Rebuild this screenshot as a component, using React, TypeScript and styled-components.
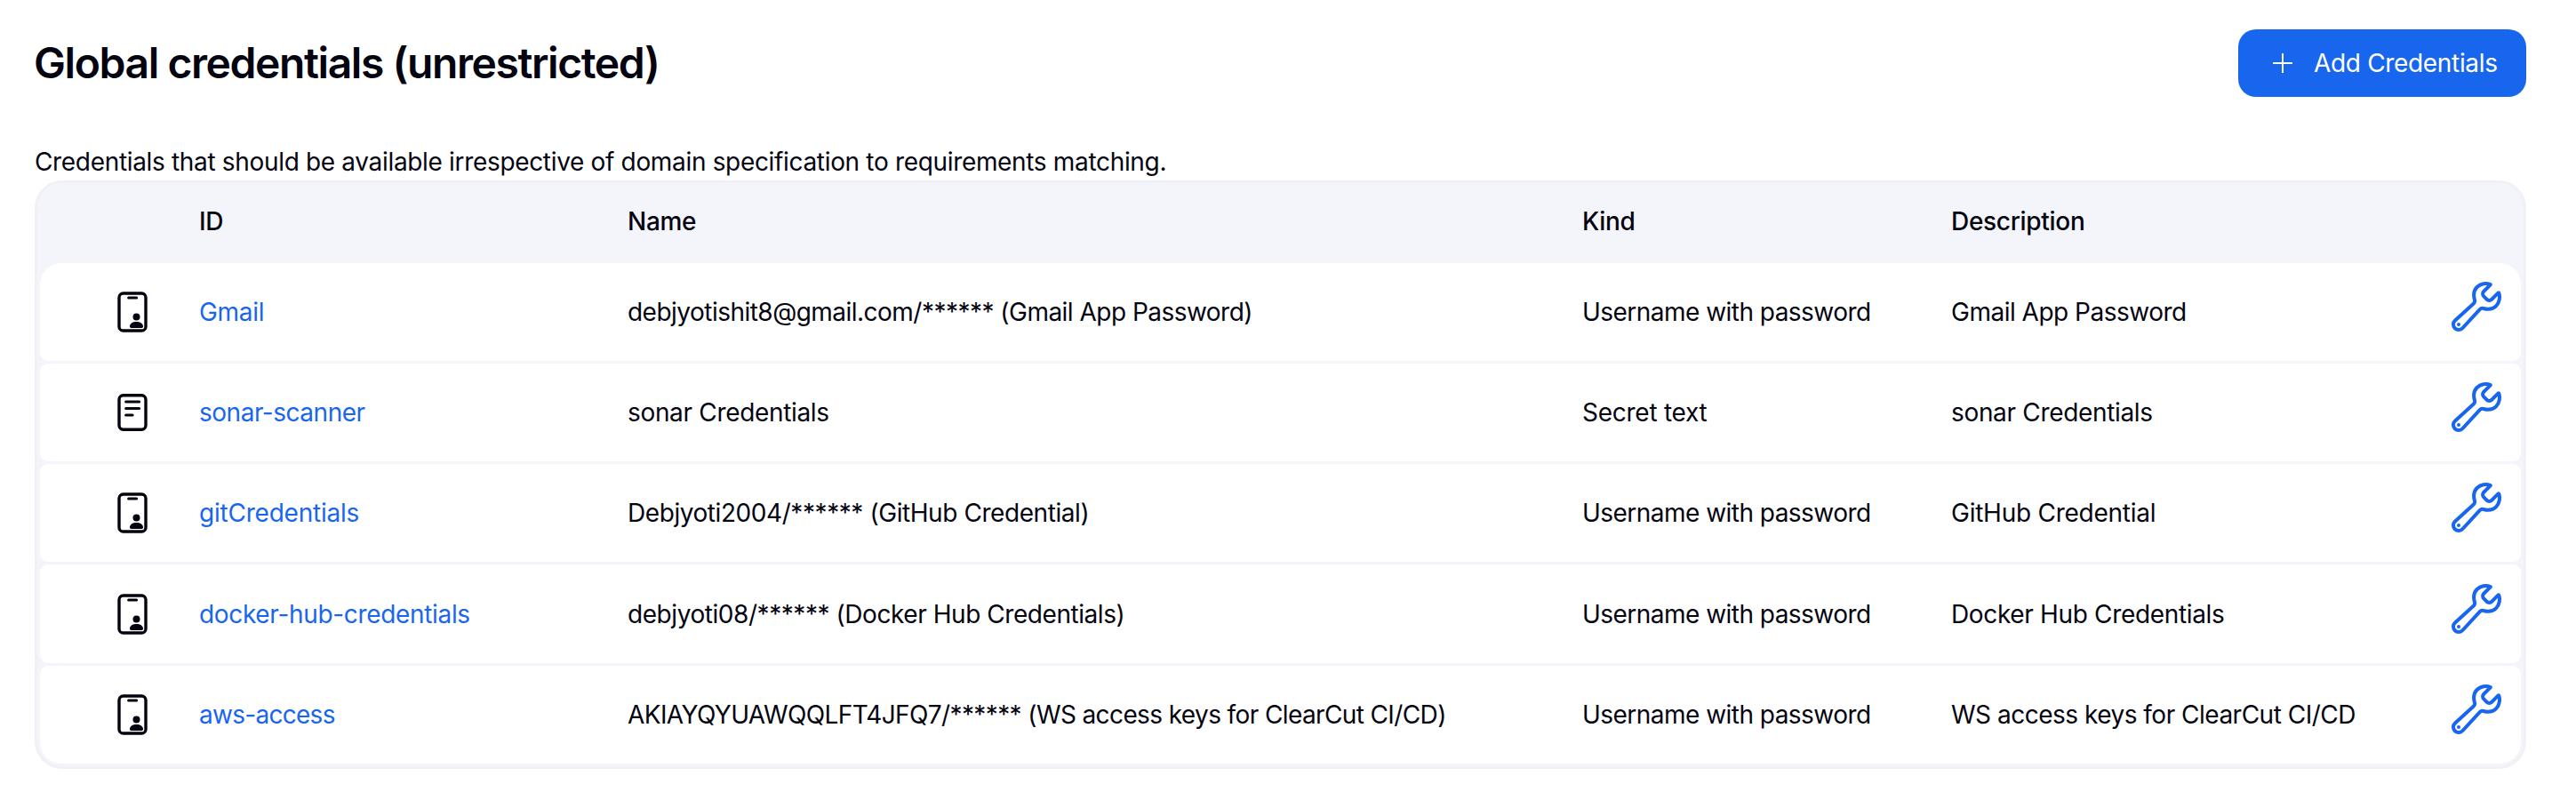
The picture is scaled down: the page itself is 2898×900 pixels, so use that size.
import React from "react";
import styled, { createGlobalStyle } from "styled-components";
import { IoBuildOutline } from "react-icons/io5";

const accent = "#1966ee";
const ink = "#040411";

const GlobalStyle = createGlobalStyle`
  *, *::before, *::after { box-sizing: border-box; }
  body {
    margin: 0;
    background: #fff;
    color: ${ink};
    font-family: Inter, "Liberation Sans", sans-serif;
    font-size: 28px;
    line-height: 40px;
  }
`;

const Page = styled.main`
  min-height: 900px;
  padding: 33px 56px 35px 39px;
`;

const TopBar = styled.header`
  display: flex;
  align-items: center;
  justify-content: space-between;
  height: 76px;
`;

const Title = styled.h1`
  margin: 0;
  font-size: 48px;
  font-weight: 600;
  line-height: 60px;
  letter-spacing: -1.42px;
  margin-left: -1px;
`;

const AddButton = styled.button`
  display: flex;
  align-items: center;
  gap: 24px;
  width: 324px;
  height: 76px;
  padding: 0 0 0 39px;
  border: 0;
  border-radius: 20px;
  background: ${accent};
  color: #fff;
  font: inherit;
  letter-spacing: -0.33px;
  white-space: nowrap;
`;

const Intro = styled.p`
  margin: 53px 0 1px;
  letter-spacing: -0.33px;
`;

const Table = styled.div`
  display: flex;
  flex-direction: column;
  gap: 3px;
  padding: 0 3px 3px;
  border: 3px solid #f0f1f6;
  border-radius: 31px;
  background: #f4f5fa;
`;

const Line = styled.div`
  display: grid;
  grid-template-columns: 179px 482px 1074px 415px 1fr 82px;
  align-items: center;
  white-space: nowrap;
`;

const HeadLine = styled(Line)`
  height: 87px;
  padding-bottom: 2px;
  font-weight: 500;
  letter-spacing: -0.3px;
`;

const Row = styled(Line)`
  height: 110px;
  border-radius: 9px;
  background: #fff;

  &:nth-child(2) { border-radius: 24px 24px 9px 9px; }
  &:nth-child(5) { height: 111px; }
  &:last-child { border-radius: 9px 9px 24px 24px; }
`;

const KindIcon = styled.div`
  display: flex;
  padding-left: 87px;
`;

const Text = styled.span<{ $tracking: number }>`
  letter-spacing: ${(p) => p.$tracking}px;
`;

const IdLink = styled.a<{ $tracking: number }>`
  color: ${accent};
  text-decoration: none;
  letter-spacing: ${(p) => p.$tracking}px;
`;

const Update = styled.a`
  display: flex;
  padding-bottom: 12px;
  color: ${accent};
`;

const PlusIcon = () => (
  <svg width="22" height="22" viewBox="0 0 22 22" fill="none" stroke="currentColor" strokeWidth="2">
    <path d="M11 0v22M0 11h22" />
  </svg>
);

const IdCardIcon = () => (
  <svg width="34" height="46" viewBox="0 0 34 46" fill="none">
    <rect x="2" y="2" width="30" height="42" rx="4.6" stroke={ink} strokeWidth="3.4" />
    <path d="M12.6 6.9h9" stroke={ink} strokeWidth="3" strokeLinecap="round" />
    <circle cx="21.5" cy="28.5" r="4" fill={ink} />
    <path d="M14 39.3c0-3.4 3.4-5.3 7.5-5.3s7.5 1.9 7.5 5.3c0 1-.6 1.6-1.6 1.6H15.6c-1 0-1.6-.6-1.6-1.6z" fill={ink} />
  </svg>
);

const SecretIcon = () => (
  <svg width="34" height="42" viewBox="0 0 34 42" fill="none" stroke={ink} strokeWidth="3.4" strokeLinecap="round">
    <rect x="2" y="1.8" width="30" height="38.4" rx="4.6" />
    <path d="M9.6 9h15M9.6 16.5h15M9.6 24h7.5" strokeWidth="3" />
  </svg>
);

type Cell = [text: string, tracking: number];

interface Credential {
  secret?: boolean;
  id: Cell;
  name: Cell;
  kind: Cell;
  description: Cell;
}

const userPass: Cell = ["Username with password", -0.53];

const credentials: Credential[] = [
  {
    id: ["Gmail", -0.3],
    name: ["debjyotishit8@gmail.com/****** (Gmail App Password)", -0.52],
    kind: userPass,
    description: ["Gmail App Password", -0.5],
  },
  {
    secret: true,
    id: ["sonar-scanner", -0.48],
    name: ["sonar Credentials", -0.33],
    kind: ["Secret text", -0.26],
    description: ["sonar Credentials", -0.33],
  },
  {
    id: ["gitCredentials", -0.22],
    name: ["Debjyoti2004/****** (GitHub Credential)", -0.43],
    kind: userPass,
    description: ["GitHub Credential", -0.25],
  },
  {
    id: ["docker-hub-credentials", -0.33],
    name: ["debjyoti08/****** (Docker Hub Credentials)", -0.44],
    kind: userPass,
    description: ["Docker Hub Credentials", -0.34],
  },
  {
    id: ["aws-access", -0.72],
    name: ["AKIAYQYUAWQQLFT4JFQ7/****** (WS access keys for ClearCut CI/CD)", -0.61],
    kind: userPass,
    description: ["WS access keys for ClearCut CI/CD", -0.5],
  },
];

export default function App() {
  return (
    <Page>
      <GlobalStyle />
      <TopBar>
        <Title>Global credentials (unrestricted)</Title>
        <AddButton>
          <PlusIcon />
          Add Credentials
        </AddButton>
      </TopBar>
      <Intro>
        Credentials that should be available irrespective of domain specification to requirements matching.
      </Intro>
      <Table>
        <HeadLine>
          <span />
          <span>ID</span>
          <span>Name</span>
          <span>Kind</span>
          <span>Description</span>
        </HeadLine>
        {credentials.map((c) => (
          <Row key={c.id[0]}>
            <KindIcon>{c.secret ? <SecretIcon /> : <IdCardIcon />}</KindIcon>
            <IdLink $tracking={c.id[1]}>{c.id[0]}</IdLink>
            <Text $tracking={c.name[1]}>{c.name[0]}</Text>
            <Text $tracking={c.kind[1]}>{c.kind[0]}</Text>
            <Text $tracking={c.description[1]}>{c.description[0]}</Text>
            <Update>
              <IoBuildOutline size={64} />
            </Update>
          </Row>
        ))}
      </Table>
    </Page>
  );
}
